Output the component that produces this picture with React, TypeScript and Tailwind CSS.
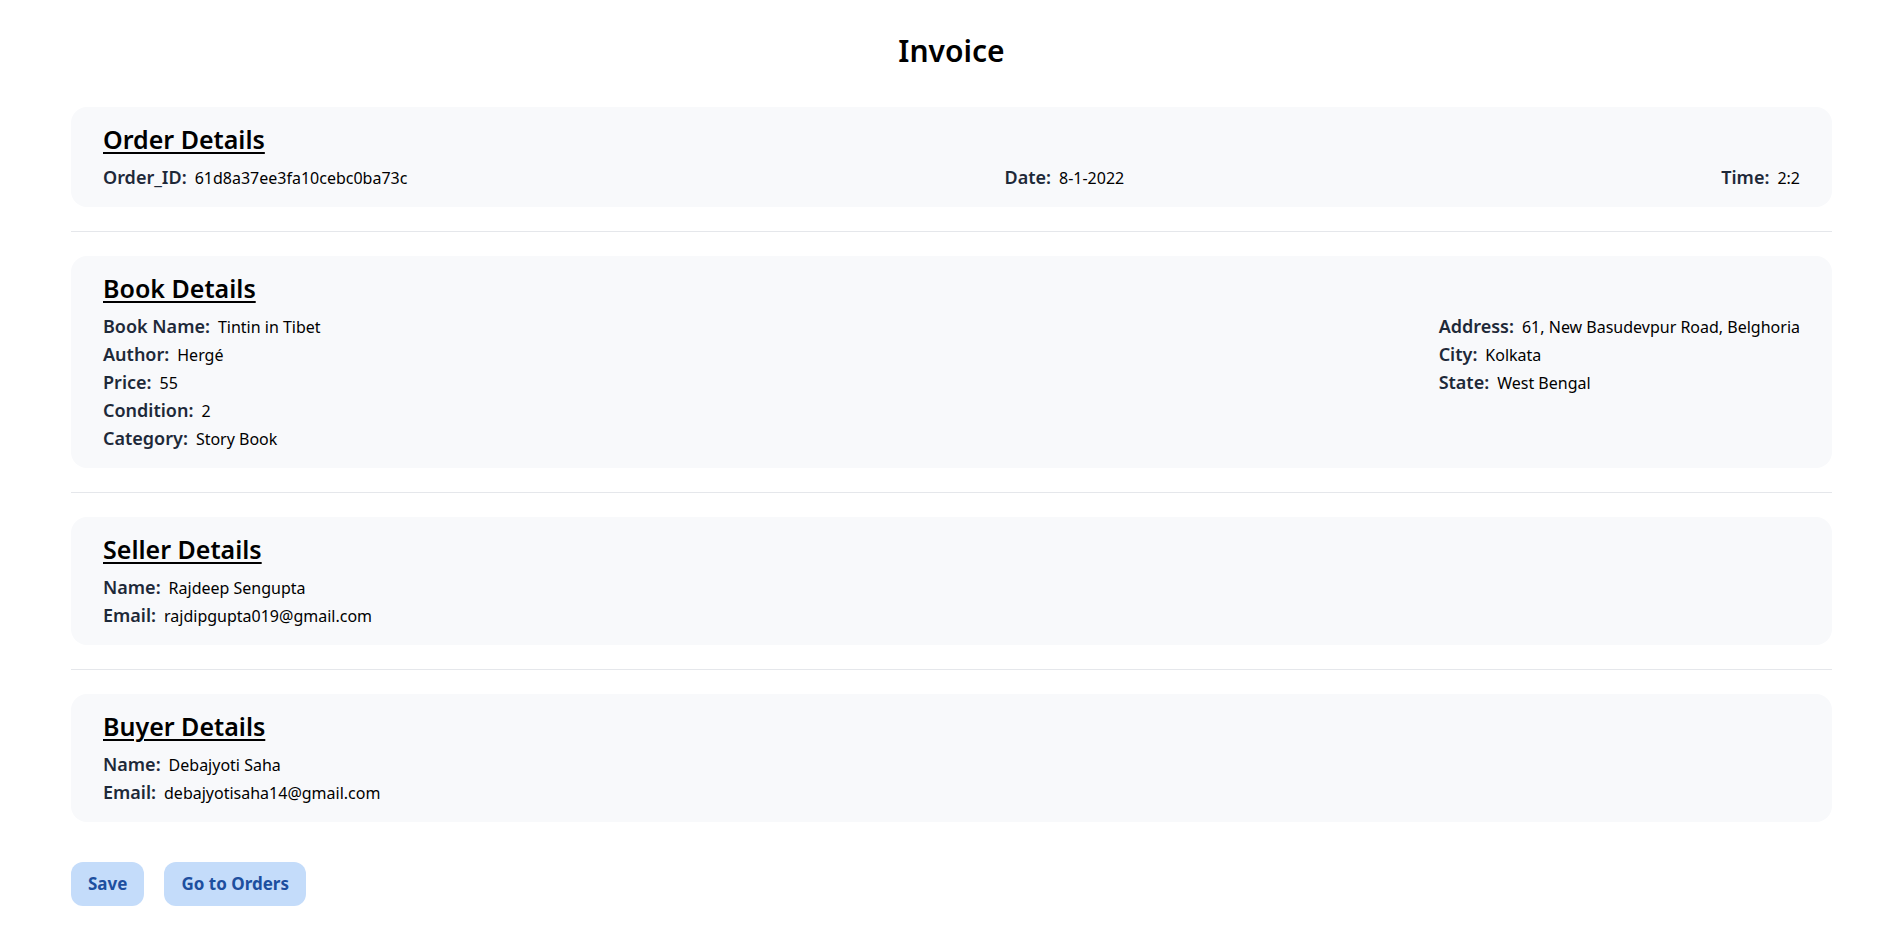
import React from "react";

type Row = { label: string; value: string };

const Field = ({ label, value }: Row) => (
  <p className="text-lg leading-7">
    <span className="font-semibold text-gray-800">{label}:</span>
    <span className="ml-2 text-base text-black">{value}</span>
  </p>
);

const Section = ({
  title,
  children,
}: {
  title: string;
  children: React.ReactNode;
}) => (
  <section className="px-8 py-4 rounded-2xl bg-[#f8f9fb]">
    <h2 className="mb-2 text-[25px] leading-8 font-semibold text-black underline decoration-2 underline-offset-[3px]">
      {title}
    </h2>
    {children}
  </section>
);

const Divider = () => <hr className="my-6 border-t border-gray-200" />;

const App = () => {
  return (
    <div
      className="min-h-screen bg-white text-black"
      style={{ fontFamily: '"Noto Sans", Inter, sans-serif' }}
    >
      <div className="ml-[71px] mr-[67px] pt-[33px] pb-10">
        <h1 className="mb-[38px] text-3xl leading-9 font-semibold text-center">
          Invoice
        </h1>

        <Section title="Order Details">
          <div className="flex justify-between">
            <Field label="Order_ID" value="61d8a37ee3fa10cebc0ba73c" />
            <Field label="Date" value="8-1-2022" />
            <Field label="Time" value="2:2" />
          </div>
        </Section>

        <Divider />

        <Section title="Book Details">
          <div className="flex justify-between">
            <div>
              <Field label="Book Name" value="Tintin in Tibet" />
              <Field label="Author" value="Hergé" />
              <Field label="Price" value="55" />
              <Field label="Condition" value="2" />
              <Field label="Category" value="Story Book" />
            </div>
            <div>
              <Field
                label="Address"
                value="61, New Basudevpur Road, Belghoria"
              />
              <Field label="City" value="Kolkata" />
              <Field label="State" value="West Bengal" />
            </div>
          </div>
        </Section>

        <Divider />

        <Section title="Seller Details">
          <Field label="Name" value="Rajdeep Sengupta" />
          <Field label="Email" value="rajdipgupta019@gmail.com" />
        </Section>

        <Divider />

        <Section title="Buyer Details">
          <Field label="Name" value="Debajyoti Saha" />
          <Field label="Email" value="debajyotisaha14@gmail.com" />
        </Section>

        <div className="flex gap-5 mt-10">
          <button className="h-11 px-[17px] rounded-xl bg-[#c4dcfa] text-[17px] font-bold text-[#1d4f9f]">
            Save
          </button>
          <button className="h-11 px-[17px] rounded-xl bg-[#c4dcfa] text-[17px] font-bold text-[#1d4f9f]">
            Go to Orders
          </button>
        </div>
      </div>
    </div>
  );
};

export default App;
